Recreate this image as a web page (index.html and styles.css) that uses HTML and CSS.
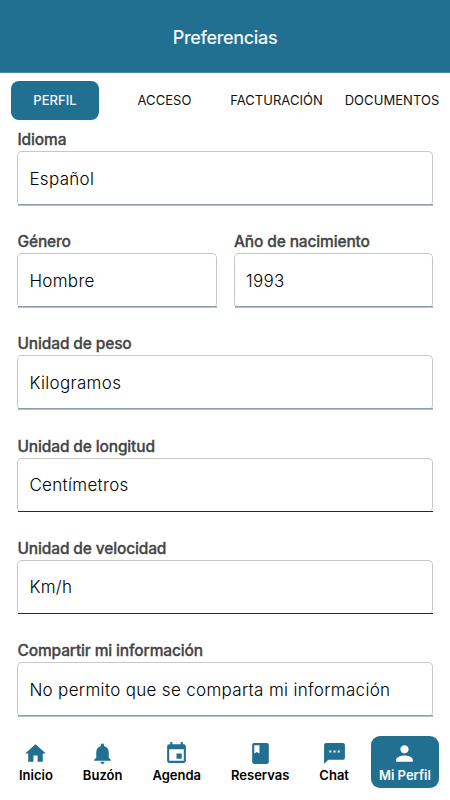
FILE: index.html
```html
<!DOCTYPE html>
<html lang="es">
<head>
<meta charset="utf-8">
<title>Preferencias</title>
<link rel="stylesheet" href="styles.css">
</head>
<body>
<header class="header"><h1>Preferencias</h1></header>
<nav class="tabs">
  <a class="tab active"><span>PERFIL</span></a>
  <a class="tab"><span>ACCESO</span></a>
  <a class="tab"><span>FACTURACIÓN</span></a>
  <a class="tab"><span>DOCUMENTOS</span></a>
</nav>
<main class="form">
  <div class="field"><label><span>Idioma</span></label><div class="box"><span>Español</span></div></div>
  <div class="row">
    <div class="field"><label><span>Género</span></label><div class="box"><span>Hombre</span></div></div>
    <div class="field"><label><span>Año de nacimiento</span></label><div class="box"><span>1993</span></div></div>
  </div>
  <div class="field"><label><span>Unidad de peso</span></label><div class="box"><span>Kilogramos</span></div></div>
  <div class="field"><label><span>Unidad de longitud</span></label><div class="box dark"><span>Centímetros</span></div></div>
  <div class="field"><label><span>Unidad de velocidad</span></label><div class="box dark"><span>Km/h</span></div></div>
  <div class="field"><label><span>Compartir mi información</span></label><div class="box"><span>No permito que se comparta mi información</span></div></div>
</main>
<nav class="bottom">
  <a class="item"><svg viewBox="0 0 24 24"><path d="M10 20v-6h4v6h5v-8h3L12 3 2 12h3v8z"/></svg><span>Inicio</span></a>
  <a class="item"><svg viewBox="0 0 24 24"><path d="M12 22c1.1 0 2-.9 2-2h-4c0 1.100.9 2 2 2zm6-6v-5c0-3.070-1.640-5.640-4.500-6.320V4c0-.83-.67-1.500-1.500-1.500s-1.500.67-1.500 1.500v.68C7.630 5.360 6 7.920 6 11v5l-2 2v1h16v-1z"/></svg><span>Buzón</span></a>
  <a class="item"><svg viewBox="0 0 24 24"><path d="M17 12h-5v5h5zM16 1v2H8V1H6v2H5c-1.110 0-1.990.9-1.990 2L3 19c0 1.100.89 2 2 2h14c1.100 0 2-.9 2-2V5c0-1.100-.9-2-2-2h-1V1zm3 18H5V8h14z"/></svg><span>Agenda</span></a>
  <a class="item"><svg viewBox="0 0 24 24"><path fill-rule="evenodd" d="M18 2H6c-1.100 0-2 .9-2 2v16c0 1.100.9 2 2 2h12c1.100 0 2-.9 2-2V4c0-1.100-.9-2-2-2zM6 4h5v8l-2.500-1.500L6 12z"/></svg><span>Reservas</span></a>
  <a class="item"><svg viewBox="0 0 24 24"><path fill-rule="evenodd" d="M20 2H4c-1.100 0-2 .9-2 2v18l4-4h14c1.100 0 2-.9 2-2V4c0-1.100-.9-2-2-2zM9 11H7V9h2zm4 0h-2V9h2zm4 0h-2V9h2z"/></svg><span>Chat</span></a>
  <a class="item active"><svg viewBox="0 0 24 24"><path d="M12 12c2.210 0 4-1.790 4-4s-1.790-4-4-4-4 1.790-4 4 1.790 4 4 4zm0 2c-2.670 0-8 1.340-8 4v2h16v-2c0-2.660-5.330-4-8-4z"/></svg><span>Mi Perfil</span></a>
</nav>
</body>
</html>
```
FILE: styles.css
```css
* { box-sizing: border-box; }
body {
  margin: 0;
  width: 450px;
  height: 800px;
  overflow: hidden;
  background: #fff;
  color: #111;
  font-family: Inter, "Liberation Sans", sans-serif;
  display: flex;
  flex-direction: column;
}
.header {
  height: 73px;
  flex: none;
  background: #217091;
  border-bottom: 1px solid #4d8ba6;
  display: flex;
  align-items: center;
  justify-content: center;
  padding-top: 2px;
}
.header h1 {
  margin: 0;
  color: #f4f8fa;
  font-size: 18px;
  font-weight: 500;
  letter-spacing: -0.33px;
}
.tabs {
  height: 54px;
  flex: none;
  display: grid;
  grid-template-columns: 88px 87px 93px 94px;
  column-gap: 22px;
  padding: 8px 0 8px 11px;
}
.tab {
  display: flex;
  align-items: center;
  justify-content: center;
  white-space: nowrap;
  font-size: 13px;
  letter-spacing: 0.05px;
  border-radius: 8px;
  padding-bottom: 1px;
}
.tab.active {
  background: #217091;
  color: #f4f8fa;
  font-weight: 500;
  margin-bottom: -1px;
  padding-bottom: 2px;
}
.form {
  flex: none;
  height: 603px;
  padding: 0 17px;
}
.row { display: flex; gap: 17px; }
.row .field { flex: 1; }
.field { height: 102.2px; }
.field label {
  display: block;
  height: 24px;
  line-height: 25.6px;
  padding-left: 0.5px;
  font-size: 15.5px;
  font-weight: 500;
  -webkit-text-stroke: 0.3px #444;
  letter-spacing: -0.14px;
  color: #444;
  white-space: nowrap;
}
.box {
  position: relative;
  height: 55px;
  border: 1px solid #c8c8c8;
  border-bottom: 0;
  border-radius: 5px;
  padding-left: 11.4px;
  display: flex;
  align-items: center;
  font-size: 17px;
  font-weight: 300;
  letter-spacing: 0.32px;
  color: #000;
  white-space: nowrap;
}
.box::after {
  content: "";
  position: absolute;
  left: 0;
  right: -1px;
  bottom: 0;
  height: 2px;
  background: linear-gradient(#8b9db3 50%, #b3c0d0 50%);
}
.box.dark { height: 54px; }
.box.dark::after {
  height: 1px;
  background: #003366;
}
.bottom {
  flex: 1;
  display: flex;
  padding: 6px 11px 12px 11px;
  justify-content: space-between;
}
.item {
  display: flex;
  flex-direction: column;
  align-items: center;
  padding-top: 5px;
  color: #000;
  font-size: 13px;
  font-weight: 600;
  line-height: 18px;
  border-radius: 9px;
  white-space: nowrap;
}
.item:not(.active) { padding-left: 8px; padding-right: 8px; }
.item svg { width: 25px; height: 25px; fill: #217091; }
.item.active {
  width: 68px;
  background: #217091;
  color: #fff;
}
.item.active svg { fill: #fff; }
```
